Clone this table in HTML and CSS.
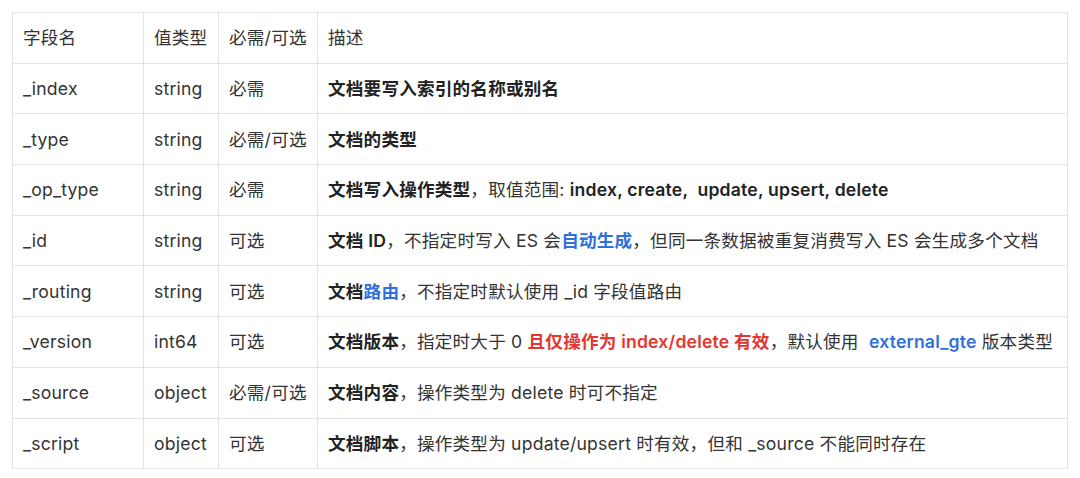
FILE: index.html
```html
<!DOCTYPE html>
<html lang="zh-CN">
<head>
    <meta charset="UTF-8">
    <title>文档字段</title>
    <link rel="stylesheet" href="styles.css">
</head>
<body>

<table class="field-table">
    <colgroup>
        <col class="col-name">
        <col class="col-type">
        <col class="col-req">
        <col>
    </colgroup>
    <tr>
        <td>字段名</td><td>值类型</td><td>必需/可选</td><td>描述</td>
    </tr>
    <tr>
        <td>_index</td><td>string</td><td>必需</td>
        <td><b>文档要写入索引的名称或别名</b></td>
    </tr>
    <tr>
        <td>_type</td><td>string</td><td>必需/可选</td>
        <td><b>文档的类型</b></td>
    </tr>
    <tr>
        <td>_op_type</td><td>string</td><td>必需</td>
        <td><b>文档写入操作类型</b>，取值范围: <b>index, create,&nbsp; update, upsert, delete</b></td>
    </tr>
    <tr>
        <td>_id</td><td>string</td><td>可选</td>
        <td><b>文档 ID</b>，不指定时写入 ES 会<span class="blue">自动生成</span>，但同一条数据被重复消费写入 ES 会生成多个文档</td>
    </tr>
    <tr>
        <td>_routing</td><td>string</td><td>可选</td>
        <td><b>文档</b><span class="blue">路由</span>，不指定时默认使用 _id 字段值路由</td>
    </tr>
    <tr>
        <td>_version</td><td>int64</td><td>可选</td>
        <td><b>文档版本</b>，指定时大于 0 <span class="red">且仅操作为 index/delete 有效</span>，默认使用&nbsp; <span class="blue">external_gte</span> 版本类型</td>
    </tr>
    <tr>
        <td>_source</td><td>object</td><td>必需/可选</td>
        <td><b>文档内容</b>，操作类型为 delete 时可不指定</td>
    </tr>
    <tr>
        <td>_script</td><td>object</td><td>可选</td>
        <td><b>文档脚本</b>，操作类型为 update/upsert 时有效，但和 _source 不能同时存在</td>
    </tr>
</table>

</body>
</html>
```

FILE: styles.css
```css
body {
    margin: 0;
    padding: 12px;
    background: #fff;
    font-family: 'Inter', 'Noto Sans CJK SC', sans-serif;
    font-size: 17.6px;
    color: #333;
}
.field-table {
    width: 1056px;
    border-collapse: collapse;
    table-layout: fixed;
}
.col-name { width: 131px; }
.col-type { width: 75px; }
.col-req { width: 99px; }
.field-table td {
    height: 49.7px;
    padding: 0 10px;
    border: 1px solid #e3e3e3;
    vertical-align: middle;
    white-space: nowrap;
    line-height: 1.2;
    letter-spacing: 0.2px;
}
.field-table b {
    color: #222;
    font-weight: 600;
}
.blue {
    color: #3070dc;
    font-weight: 600;
}
.red {
    color: #e2362f;
    font-weight: 600;
}
```
